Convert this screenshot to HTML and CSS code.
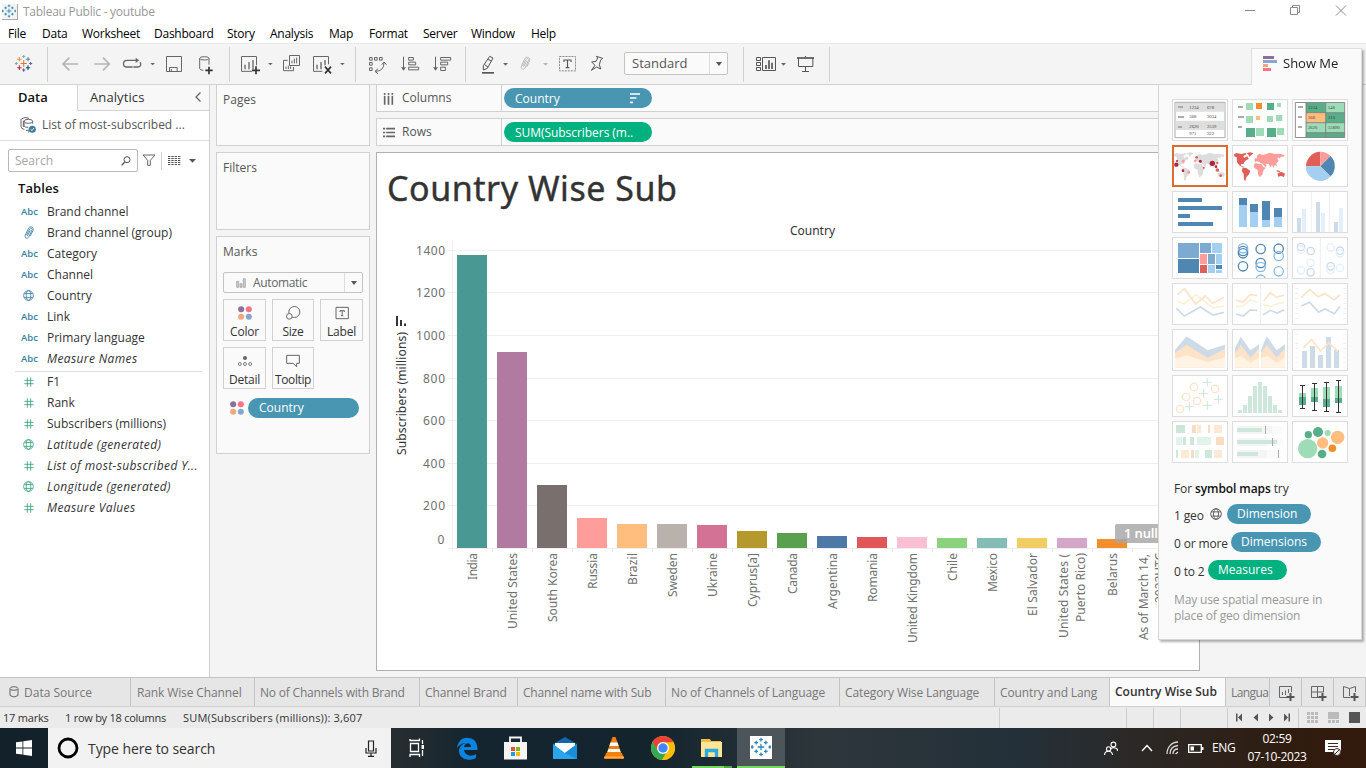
FILE: index.html
```html
<!DOCTYPE html>
<html lang="en">
<head>
<meta charset="utf-8">
<title>Tableau Public - youtube</title>
<link rel="stylesheet" href="styles.css">
</head>
<body>
<svg class="defs" width="0" height="0">
  <defs>
    <symbol id="hash" viewBox="0 0 30 30"><path d="M10 1V29M20 1V29M1 10H29M1 20H29" fill="none" stroke="#3aa57c" stroke-width="2.6"/></symbol>
    <symbol id="globe" viewBox="0 0 34 34"><g fill="none" stroke="currentColor" stroke-width="2.6"><circle cx="17" cy="17" r="15"/><ellipse cx="17" cy="17" rx="7" ry="15"/><path d="M4 11H30M4 23H30"/></g></symbol>
    <symbol id="clip" viewBox="0 0 36 42"><path d="M10 28L20 9C23 4 29 7 27 12L17 33C13 40 3 36 7 27L17 6C22-1 34 4 30 13L22 30M13 30L22 13" fill="none" stroke="currentColor" stroke-width="2.6"/></symbol>
    <symbol id="dots" viewBox="0 0 44 44"><circle cx="10" cy="10" r="9.5" fill="#8a719b"/><circle cx="34" cy="10" r="9.5" fill="#fa7283"/><circle cx="10" cy="34" r="9.5" fill="#f1a97c"/><circle cx="34" cy="34" r="9.5" fill="#85a7cf"/></symbol>
    <symbol id="cross" viewBox="-27 -27 54 54"><g fill="none" stroke="currentColor" stroke-width="3.4"><path d="M0-9V9M-9 0H9M0-25v10M-5-20h10M0 15v10M-5 20h10M-24-5v10M-28 0h8M24-5v10M20 0h8M-13-17v10M-18-12h10M13-17v10M8-12h10M-13 7v10M-18 12h10M13 7v10M8 12h10"/></g></symbol>
  </defs>
</svg>

<header class="titlebar">
  <span class="app-icon"><svg width="14" height="14"><use href="#cross"/></svg></span>
  <span class="app-title">Tableau Public - youtube</span>
  <svg class="window-buttons" width="126" height="23" viewBox="1240 0 126 23"><g fill="none" stroke="#8c8c8c"><path d="M1245 10.5h10M1290.5 7.500h7v7h-7zM1292.500 7.500v-2h7v7h-2M1336 5.500l10 10M1346 5.500l-10 10"/></g></svg>
</header>
<nav class="menubar"><span>File</span><span>Data</span><span>Worksheet</span><span>Dashboard</span><span>Story</span><span>Analysis</span><span>Map</span><span>Format</span><span>Server</span><span>Window</span><span>Help</span></nav>

<div class="toolbar">
  <svg width="47" height="41" viewBox="0 129 141 123"><g fill="none" stroke-width="3.2"><path d="M71 181v19M61.500 190.500h19" stroke="#e8762c"/><path d="M58 171v13M51.500 177.500h13" stroke="#eb912b"/><path d="M84 171v13M77.500 177.500h13" stroke="#59879b"/><path d="M58 196v14M51.500 203h13" stroke="#c72037"/><path d="M84 196v14M77.500 203h13" stroke="#1f447e"/><path d="M71 165v9M66.500 169.500h9M49 186v9M44.500 190.500h9" stroke="#7badb5"/><path d="M71 205v10M66 210h10M92 186v9M87.500 190.500h9" stroke="#5c6692"/></g></svg>
  <i class="sep"></i>
  <svg width="36" height="41" viewBox="144 129 108 123"><path d="M234 192H190M208 173L189 192L208 211" fill="none" stroke="#b5b5b5" stroke-width="5"/></svg>
  <svg width="32" height="41" viewBox="252 129 96 123"><path d="M283 192H327M309 173L328 192L309 211" fill="none" stroke="#b5b5b5" stroke-width="5"/></svg>
  <svg width="42" height="41" viewBox="348 129 126 123"><path d="M398 201H381C367 201 367 181 381 181H415M400 201H414C424 201 423 190 420 187" fill="none" stroke="#666" stroke-width="4"/><path d="M407 173L417 181L407 189Z" fill="#666"/><path d="M451 189h14l-7 7z" fill="#666"/></svg>
  <svg width="30" height="41" viewBox="474 129 90 123"><path d="M499.500 169.500H544.500V214.500H499.500ZM508.500 214V202.500H531.500V214M514 207V214" fill="none" stroke="#666" stroke-width="3"/></svg>
  <svg width="41" height="41" viewBox="564 129 123 123"><g fill="none" stroke="#666" stroke-width="3"><ellipse cx="613" cy="175" rx="14" ry="5"/><path d="M599 175V206Q601 211 610 211M627 175V194"/></g><path d="M627 200V223M616 211H638" stroke="#333" stroke-width="5"/></svg>
  <i class="sep"></i>
  <svg width="48" height="41" viewBox="690 129 144 123"><path d="M756 214H724.500V169.500H769.500V196" fill="none" stroke="#666" stroke-width="3"/><path d="M735 194V208M747 186V208M759 180V208" stroke="#666" stroke-width="4"/><path d="M768 199V223M756 211H780" stroke="#333" stroke-width="5"/><path d="M804 189h14l-7 7z" fill="#666"/></svg>
  <svg width="29" height="41" viewBox="834 129 87 123"><path d="M868.500 166.500H898.500V196.500H868.500ZM863 181H850.500V212H880.500V201" fill="none" stroke="#666" stroke-width="3"/><path d="M876 182V190M883 176V190M890 173V190M858 200V207M865 197V207M872 199V207" stroke="#666" stroke-width="3"/></svg>
  <svg width="48" height="41" viewBox="921 129 144 123"><path d="M967 214H940.500V169.500H985.500V193" fill="none" stroke="#666" stroke-width="3"/><path d="M951 194V208M963 186V208M975 180V196" stroke="#666" stroke-width="4"/><path d="M975 200L993 220M993 200L975 220" stroke="#333" stroke-width="5"/><path d="M1020 189h14l-7 7z" fill="#666"/></svg>
  <i class="sep"></i>
  <svg width="38" height="41" viewBox="1068 129 114 123"><path d="M1108.500 172.500h8v8h-8zM1123.500 172.500h8v8h-8zM1138.500 172.500h8v8h-8zM1108.500 187.500h8v8h-8zM1108.500 203.500h8v8h-8zM1126 214Q1152 214 1152 188M1145 194L1152 186L1159 194M1134 206L1125 214L1134 221" fill="none" stroke="#666" stroke-width="3"/></svg>
  <svg width="31" height="41" viewBox="1182 129 93 123"><path d="M1210.500 170V210M1226 172.500h14v8h-14zM1226 186.500h21v8h-21zM1226 201.500h30v8h-30z" fill="none" stroke="#666" stroke-width="3"/><path d="M1203 202h15l-7.500 10z" fill="#666"/></svg>
  <svg width="40" height="41" viewBox="1275 129 120 123"><path d="M1306.500 170V210M1322 172.500h30v8h-30zM1322 186.500h21v8h-21zM1322 201.500h14v10h-14z" fill="none" stroke="#666" stroke-width="3"/><path d="M1299 202h15l-7.500 10z" fill="#666"/></svg>
  <i class="sep"></i>
  <svg width="49" height="41" viewBox="48 129 147 123"><path d="M96 218.500H132" stroke="#555" stroke-width="5"/><path d="M119 169L129 174L112 205L100 210V197ZM104 194L114 201M114 178L124 183" fill="none" stroke="#555" stroke-width="3"/><path d="M159 189h15l-7.500 8z" fill="#666"/></svg>
  <svg width="41" height="41" viewBox="195 129 123 123" color="#b5b5b5"><use href="#clip" x="207" y="168" width="38" height="46"/><path d="M279 189h15l-7.500 8z" fill="#b5b5b5"/></svg>
  <svg width="28" height="41" viewBox="318 129 84 123"><path d="M328.500 169.500H376.500V212.500H328.500Z" fill="none" stroke="#888" stroke-width="3" stroke-dasharray="6 3"/><path d="M342 186V180H363V186M352.500 180V203M347 203H358" fill="none" stroke="#555" stroke-width="3.500"/></svg>
  <svg width="40" height="41" viewBox="402 129 120 123"><path d="M439 169L458 175L452 180L448 194L452 207L440 201L424 211L435 196L425 186L438 184L443 174Z" fill="none" stroke="#555" stroke-width="3"/></svg>
  <div class="fit-select"><span>Standard</span><b></b></div>
  <i class="sep"></i>
  <svg width="48" height="41" viewBox="882 129 144 123"><path d="M919.500 172.500h12v9h-12zM919.500 187.500h12v9h-12zM919.500 202.500h12v9h-12zM937.500 172.500h39v39h-39z" fill="none" stroke="#555" stroke-width="3"/><path d="M948 195V207M957 181V207M966 188V207" stroke="#555" stroke-width="5"/><path d="M993 189h15l-7.500 8z" fill="#666"/></svg>
  <svg width="37" height="41" viewBox="1026 129 111 123"><path d="M1041 174H1092" stroke="#555" stroke-width="5"/><path d="M1045.500 174V199.500H1088.500V174M1066.500 168V172M1066.500 200V214M1056 214.500H1077" fill="none" stroke="#555" stroke-width="3"/></svg>
  <i class="sep"></i>
</div>

<main class="workspace">
  <aside class="data-pane">
    <div class="pane-tabs"><div class="tab-data">Data</div><div class="tab-analytics"><span>Analytics</span><svg width="8" height="12" viewBox="0 0 8 12"><path d="M6.500 1.500L2 6L6.500 10.500" fill="none" stroke="#666" stroke-width="1.300"/></svg></div></div>
    <div class="source"><svg width="17" height="17" viewBox="0 0 51 51"><g fill="none" stroke="#666" stroke-width="3"><path d="M4 6Q15-2 27 4M3 6V30Q5 36 13 37M10 11V30"/><ellipse cx="25" cy="13" rx="13" ry="6"/><path d="M12 13V27Q16 32 25 31M38 13V20M18 40H27M27 34L32 40L24 46"/></g><circle cx="37" cy="37" r="10.500" fill="#3a7fa0"/><path d="M32 37L36 41L42 33" fill="none" stroke="#fff" stroke-width="2.500"/></svg><span>List of most-subscribed ...</span></div>
    <div class="search-row">
      <div class="search"><span>Search</span><svg width="10" height="10" viewBox="0 0 30 30"><circle cx="18" cy="11" r="9" fill="none" stroke="#555" stroke-width="3"/><path d="M11 18L2 28" stroke="#555" stroke-width="4"/></svg></div>
      <svg class="funnel" width="14" height="13" viewBox="0 0 42 39"><path d="M3 3H39L25 19V34H17V19Z" fill="none" stroke="#666" stroke-width="3"/></svg>
      <i></i>
      <svg class="view-list" width="29" height="12" viewBox="0 0 87 36"><path d="M0 4.500H37M0 10.500H37M0 16.500H37M0 22.500H37M0 28.500H37" stroke="#555" stroke-width="3" stroke-dasharray="7 3"/><path d="M63 12H84L73.500 23Z" fill="#555"/></svg>
    </div>
    <h2>Tables</h2>
    <ul class="fields dims">
      <li><b>Abc</b>Brand channel</li>
      <li><svg width="12" height="14" color="#3a7fa0"><use href="#clip"/></svg>Brand channel (group)</li>
      <li><b>Abc</b>Category</li>
      <li><b>Abc</b>Channel</li>
      <li><svg width="11" height="11" color="#3a7fa0"><use href="#globe"/></svg>Country</li>
      <li><b>Abc</b>Link</li>
      <li><b>Abc</b>Primary language</li>
      <li class="gen"><b>Abc</b>Measure Names</li>
    </ul>
    <ul class="fields measures">
      <li><svg width="10" height="10"><use href="#hash"/></svg>F1</li>
      <li><svg width="10" height="10"><use href="#hash"/></svg>Rank</li>
      <li><svg width="10" height="10"><use href="#hash"/></svg>Subscribers (millions)</li>
      <li class="gen"><svg width="11" height="11" color="#3aa57c"><use href="#globe"/></svg>Latitude (generated)</li>
      <li class="gen"><svg width="10" height="10"><use href="#hash"/></svg>List of most-subscribed Y...</li>
      <li class="gen"><svg width="11" height="11" color="#3aa57c"><use href="#globe"/></svg>Longitude (generated)</li>
      <li class="gen"><svg width="10" height="10"><use href="#hash"/></svg>Measure Values</li>
    </ul>
  </aside>

  <section class="cards">
    <div class="card pages">Pages</div>
    <div class="card filters">Filters</div>
    <div class="card marks">
      <div class="marks-title">Marks</div>
      <div class="mark-type"><svg width="10" height="10" viewBox="0 0 30 30"><g fill="#ccc" stroke="#999" stroke-width="2"><path d="M2 10h6v18H2zM12 17h6v11h-6zM22 2h6v26h-6z"/></g></svg><span>Automatic</span><b></b></div>
      <div class="mark-buttons">
        <div><svg width="14" height="14"><use href="#dots"/></svg>Color</div>
        <div><svg width="15" height="14" viewBox="0 0 45 42"><g fill="none" stroke="#666" stroke-width="3"><circle cx="25" cy="18" r="16.500"/><circle cx="10" cy="31" r="8.500" fill="#fafafa"/></g></svg>Size</div>
        <div><svg width="14" height="14" viewBox="0 0 42 42"><path d="M3 4H40V38H3ZM15 18V14H28V18M21.500 14V29M18 29H25" fill="none" stroke="#666" stroke-width="3"/></svg>Label</div>
        <div><svg width="14" height="14" viewBox="0 0 42 42"><circle cx="21" cy="12" r="6" fill="#666"/><g fill="none" stroke="#666" stroke-width="2.500"><circle cx="5.500" cy="30" r="4.500"/><circle cx="21" cy="30" r="4.500"/><circle cx="36.500" cy="30" r="4.500"/></g></svg>Detail</div>
        <div><svg width="14" height="14" viewBox="0 0 42 42"><path d="M2 4H40V28H32V38L21 28H2Z" fill="none" stroke="#666" stroke-width="3"/></svg><span class="tip-label">Tooltip</span></div>
      </div>
      <div class="encoding"><svg width="14" height="14"><use href="#dots"/></svg><span class="pill blue">Country</span></div>
    </div>
  </section>

  <section class="view-column">
    <div class="shelf"><div class="shelf-name"><svg width="12" height="13" viewBox="0 0 36 39"><path d="M5 3V38M16.500 3V38M28 3V38" stroke="#666" stroke-width="5"/><path d="M0 10H36" stroke="#fafafa" stroke-width="3"/></svg>Columns</div><span class="pill blue">Country<svg width="10" height="11" viewBox="0 0 30 33"><path d="M0 3H30M0 15H19M0 28H9" stroke="#fff" stroke-width="5"/></svg></span></div>
    <div class="shelf"><div class="shelf-name"><svg width="12" height="13" viewBox="0 0 36 39"><path d="M0 8H36M0 19.500H36M0 31H36" stroke="#666" stroke-width="5"/><path d="M8 0V39" stroke="#fafafa" stroke-width="3"/></svg>Rows</div><span class="pill green">SUM(Subscribers (m..</span></div>
    <div class="sheet">
      <svg class="chart" width="822" height="517" viewBox="377 153 822 517">
        <text class="chart-title" x="387" y="201" textLength="290">Country Wise Sub</text>
        <text class="col-head" x="790" y="235" textLength="45">Country</text>
        <path class="grid" d="M448 250.500H1199M448 292.500H1199M448 335.500H1199M448 378.500H1199M448 420.500H1199M448 463.500H1199M448 505.500H1199M452.500 240V548"/>
        <path class="grid" d="M448 548.500H1199M452.500 548v4M492.500 548v4M532.500 548v4M572.500 548v4M612.500 548v4M652.500 548v4M692.500 548v4M732.500 548v4M772.500 548v4M812.500 548v4M852.500 548v4M892.500 548v4M932.500 548v4M972.500 548v4M1012.500 548v4M1052.500 548v4M1092.500 548v4M1132.500 548v4"/>
        <g class="tick">
          <text x="416" y="255" textLength="29">1400</text><text x="416" y="297" textLength="29">1200</text><text x="416" y="340" textLength="29">1000</text><text x="423" y="383" textLength="22">800</text><text x="423" y="425" textLength="22">600</text><text x="423" y="468" textLength="22">400</text><text x="423" y="510" textLength="22">200</text><text x="437.500" y="544">0</text>
        </g>
        <text class="axis-name" transform="translate(406 455) rotate(-90)" textLength="123">Subscribers (millions)</text>
        <path d="M396 316h2v10h-2zM400 320h2v6h-2zM404 323.500h2v2.500h-2z" fill="#333"/>
        <g shape-rendering="crispEdges">
          <path fill="#499894" d="M457 255h30v293h-30z"/><path fill="#b07aa1" d="M497 352h30v196h-30z"/><path fill="#79706e" d="M537 485h30v63h-30z"/><path fill="#ff9d9a" d="M577 518h30v30h-30z"/><path fill="#ffbe7d" d="M617 524h30v24h-30z"/><path fill="#bab0ac" d="M657 524h30v24h-30z"/><path fill="#d37295" d="M697 525h30v23h-30z"/><path fill="#b6992d" d="M737 531h30v17h-30z"/><path fill="#59a14f" d="M777 533h30v15h-30z"/><path fill="#4e79a7" d="M817 536h30v12h-30z"/><path fill="#e15759" d="M857 537h30v11h-30z"/><path fill="#fabfd2" d="M897 537h30v11h-30z"/><path fill="#8cd17d" d="M937 538h30v10h-30z"/><path fill="#86bcb6" d="M977 538h30v10h-30z"/><path fill="#f1ce63" d="M1017 538h30v10h-30z"/><path fill="#d4a6c8" d="M1057 538h30v10h-30z"/><path fill="#f28e2b" d="M1097 539h30v9h-30z"/>
        </g>
        <g class="cat">
          <text transform="translate(477 580) rotate(-90)" textLength="27">India</text>
          <text transform="translate(517 629) rotate(-90)" textLength="76">United States</text>
          <text transform="translate(557 622) rotate(-90)" textLength="69">South Korea</text>
          <text transform="translate(597 589) rotate(-90)" textLength="36">Russia</text>
          <text transform="translate(637 585) rotate(-90)" textLength="32">Brazil</text>
          <text transform="translate(677 597) rotate(-90)" textLength="44">Sweden</text>
          <text transform="translate(717 597) rotate(-90)" textLength="44">Ukraine</text>
          <text transform="translate(757 607) rotate(-90)" textLength="54">Cyprus[a]</text>
          <text transform="translate(797 594) rotate(-90)" textLength="41">Canada</text>
          <text transform="translate(837 609) rotate(-90)" textLength="56">Argentina</text>
          <text transform="translate(877 602) rotate(-90)" textLength="49">Romania</text>
          <text transform="translate(917 643) rotate(-90)" textLength="90">United Kingdom</text>
          <text transform="translate(957 581) rotate(-90)" textLength="28">Chile</text>
          <text transform="translate(997 592) rotate(-90)" textLength="39">Mexico</text>
          <text transform="translate(1037 616) rotate(-90)" textLength="63">El Salvador</text>
          <text transform="translate(1068 638) rotate(-90)" textLength="84">United States (</text>
          <text transform="translate(1085 622) rotate(-90)" textLength="69">Puerto Rico)</text>
          <text transform="translate(1117 596) rotate(-90)" textLength="43">Belarus</text>
          <text transform="translate(1148 640) rotate(-90)" textLength="86">As of March 14,</text>
          <text transform="translate(1164 603) rotate(-90)" textLength="50">2023UTC</text>
        </g>
        <rect x="1115" y="524" width="66" height="19" rx="2" fill="#a6a6a6" fill-opacity=".82"/>
        <text class="null-text" x="1124" y="538" textLength="34">1 null</text>
      </svg>
    </div>
  </section>
</main>

<aside class="show-me">
  <div class="show-me-tab"><svg width="14" height="15" viewBox="0 0 42 45"><path fill="#8a719b" d="M0 0h33v9H0z"/><path fill="#85a7cf" d="M0 12h42v9H0z"/><path fill="#f1a97c" d="M0 24h15v9H0z"/><path fill="#fa7283" d="M0 36h24v9H0z"/></svg><span>Show Me</span></div>
  <div class="show-me-body">
    <div class="thumbs">
      <svg viewBox="48 45 168 126"><path d="M57 55h150v106H57z" fill="#fff" stroke="#aaa" stroke-width="3"/><path fill="#dedede" d="M59 57h146v26H59zM59 110h146v28H59z"/><path d="M66 69h15M66 99h18M66 129h12" stroke="#aaa" stroke-width="6"/><g class="tiny"><text x="100" y="75">1234</text><text x="153" y="75">678</text><text x="100" y="103">368</text><text x="153" y="103">3034</text><text x="100" y="131">2620</text><text x="153" y="131">2559</text><text x="100" y="154">971</text><text x="153" y="154">322</text></g></svg>
      <svg viewBox="228 45 168 126"><path d="M246 69h15M246 99h18M246 129h12" stroke="#aaa" stroke-width="6"/><path fill="#9edcb8" d="M270 57h21v21h-21zM363 57h12v12h-12zM270 96h21v21h-21zM333 96h18v18h-18zM360 93h19v18h-19zM300 132h24v24h-24zM363 132h21v21h-21z"/><path fill="#57ae89" d="M333 57h21v21h-21zM270 132h27v27h-27zM333 132h27v27h-27z"/><path fill="#f28e2b" d="M300 57h18v18h-18z"/><path fill="#ffbe7d" d="M300 96h12v12h-12z"/></svg>
      <svg viewBox="408 45 168 126"><path d="M418 55h148v106H418z" fill="#fff"/><path fill="#57ae89" d="M450 56h59v30h-59zM509 86h57v30h-57zM450 146h59v14h-59z"/><path fill="#9edcb8" d="M509 56h57v30h-57zM450 116h59v30h-59zM509 116h57v30h-57z"/><path fill="#ffbe7d" d="M450 86h59v30h-59z"/><path fill="#57ae89" d="M509 146h57v14h-57z"/><path d="M418 55.500h148v105H418zM450 56v104M509 56v104M450 86h116M450 116h116M450 146h116" fill="none" stroke="#777" stroke-width="2.500"/><path d="M426 69h15M426 99h12M426 129h12" stroke="#aaa" stroke-width="6"/><g class="tiny"><text x="456" y="75">1234</text><text x="516" y="75">546</text><text x="456" y="106">368</text><text x="516" y="106">310</text><text x="456" y="136">2620</text><text x="516" y="136">53890</text></g></svg>
      <svg class="picked" viewBox="48 183 168 126"><g fill="#ddd"><path d="M54 211L62 207L76 210L88 207L92 210L82 216L84 222L94 217L98 225L90 229L83 237L84 240L75 240L76 246L84 248L82 251L70 244L63 235L62 220L55 217ZM92 207L103 205L113 208L105 214L101 219L97 212Z"/><path d="M80 251L91 252L103 260L99 271L91 280L88 291L84 287L83 270L77 260Z"/><path d="M185 268L196 263L207 269L204 279L195 276L186 278ZM182 259L192 261L192 264L182 263Z"/><path d="M115 227L119 221L122 224L124 213L131 209L138 213L150 211L160 206L176 210L190 209L206 213L203 218L194 218L192 225L188 220L184 224L188 231L181 238L183 247L176 243L173 253L168 242L164 250L158 240L149 239L152 246L147 249L140 239L133 237L129 233L123 232L118 235Z"/><path d="M117 238L136 240L143 250L149 251L141 262L140 271L131 280L126 270L125 258L115 252L113 245Z"/></g><g fill="#b6213b"><circle cx="61" cy="242" r="6.500"/><circle cx="63" cy="231" r="3"/><circle cx="169" cy="238" r="8"/><circle cx="133" cy="232" r="4.500"/><circle cx="81" cy="260" r="4"/><circle cx="180" cy="248" r="4"/></g><g fill="#e15f59"><circle cx="122" cy="220" r="4"/><circle cx="184" cy="258" r="5.500"/><circle cx="194" cy="275" r="4"/><circle cx="143" cy="251" r="3"/><circle cx="184" cy="237" r="3.500"/></g><g fill="#ff9d9a"><circle cx="82" cy="232" r="4.500"/><circle cx="118" cy="231" r="4"/><circle cx="98" cy="265" r="4.500"/></g></svg>
      <svg viewBox="228 183 168 126"><g transform="translate(180 0)"><g fill="#e15f59"><path d="M54 211L62 207L76 210L88 207L92 210L82 216L84 222L94 217L98 225L90 229L83 237L84 240L75 240L76 246L84 248L82 251L70 244L63 235L62 220L55 217ZM92 207L103 205L113 208L105 214L101 219L97 212Z"/><path d="M80 251L91 252L103 260L99 271L91 280L88 291L84 287L83 270L77 260Z"/><path d="M185 268L196 263L207 269L204 279L195 276L186 278ZM182 259L192 261L192 264L182 263Z"/></g><g fill="#ff9d9a"><path d="M115 227L119 221L122 224L124 213L131 209L138 213L150 211L160 206L176 210L190 209L206 213L203 218L194 218L192 225L188 220L184 224L188 231L181 238L183 247L176 243L173 253L168 242L164 250L158 240L149 239L152 246L147 249L140 239L133 237L129 233L123 232L118 235Z"/><path d="M117 238L136 240L143 250L149 251L141 262L140 271L131 280L126 270L125 258L115 252L113 245Z"/></g></g></svg>
      <svg viewBox="408 183 168 126"><path fill="#e15f59" d="M493 247H450A43.500 43.500 0 0 1 493 203.500Z"/><path fill="#ff9d9a" d="M493 247V203.500A43.500 43.500 0 0 1 523.700 216.300Z"/><path fill="#5087b2" d="M493 247L523.700 216.300A43.500 43.500 0 0 1 523.700 277.700Z"/><path fill="#a5cff0" d="M493 247L523.700 277.700A43.500 43.500 0 0 1 449.500 247Z"/></svg>
      <svg viewBox="48 321 168 126"><path fill="#5087b2" d="M66 342h72v12H66zM66 366h132v12H66zM66 390h36v12H66zM66 414h105v12H66z"/></svg>
      <svg viewBox="228 321 168 126"><path fill="#a5cff0" d="M249 363h24v66h-24zM282 384h24v45h-24zM318 408h24v21h-24zM354 399h24v30h-24z"/><path fill="#5087b2" d="M249 342h24v21h-24zM282 360h24v24h-24zM318 351h24v57h-24zM354 372h24v27h-24z"/></svg>
      <svg viewBox="408 321 168 126"><path d="M466 324v120M520 324v120" stroke="#eee" stroke-width="3"/><path fill="#cddae7" d="M423 402h12v42h-12zM480 354h12v90h-12zM534 414h12v30h-12z"/><path fill="#e3f0fb" d="M438 375h12v69h-12zM495 387h12v57h-12zM549 372h12v72h-12z"/></svg>
      <svg viewBox="48 459 168 126"><path fill="#7caad0" d="M66 477h63v45H66zM132 477h33v30h-33zM156 510h21v30h-21z"/><path fill="#5087b2" d="M66 525h63v42H66zM180 543h18v12h-18z"/><path fill="#a5cff0" d="M168 477h30v30h-30zM180 510h18v30h-18zM156 543h21v24h-21zM180 558h18v9h-18z"/><path fill="#ff9d9a" d="M132 510h21v30h-21z"/><path fill="#e15f59" d="M132 543h21v24h-21z"/></svg>
      <svg viewBox="228 459 168 126"><g fill="none" stroke="#5087b2" stroke-width="4"><circle cx="261" cy="501" r="14"/><circle cx="261" cy="508" r="14"/><circle cx="261" cy="547" r="14"/><circle cx="314" cy="495" r="14"/><circle cx="314" cy="537" r="14"/><circle cx="368" cy="494" r="14"/></g><g fill="none" stroke="#86bbe5" stroke-width="4"><circle cx="261" cy="493" r="14"/><circle cx="314" cy="549" r="14"/><circle cx="314" cy="587" r="14"/><circle cx="368" cy="516" r="14"/><circle cx="368" cy="562" r="14"/></g></svg>
      <svg viewBox="408 459 168 126"><path d="M493 462v120" stroke="#eee" stroke-width="3"/><g fill="none" stroke="#cddae7" stroke-width="4"><circle cx="435" cy="489" r="11"/><circle cx="464" cy="501" r="11"/><circle cx="464" cy="565" r="11"/><circle cx="552" cy="500" r="11"/><circle cx="524" cy="547" r="11"/></g><g fill="none" stroke="#e3f0fb" stroke-width="4"><circle cx="435" cy="497" r="11"/><circle cx="464" cy="537" r="11"/><circle cx="435" cy="559" r="11"/><circle cx="524" cy="490" r="11"/><circle cx="552" cy="508" r="11"/><circle cx="524" cy="558" r="11"/><circle cx="552" cy="552" r="11"/></g></svg>
      <svg viewBox="48 597 168 126"><g fill="none" stroke-width="5"><path stroke="#fdf0d7" d="M63 650L84 660L120 632L171 672L204 666"/><path stroke="#fee3c9" d="M64 632L85 614L119 660L148 636L170 658L204 640"/><path stroke="#cddae7" d="M61 673L85 696L133 669L171 693L204 685"/></g></svg>
      <svg viewBox="228 597 168 126"><path d="M314 600v120" stroke="#eee" stroke-width="3"/><g fill="none" stroke-width="5"><path stroke="#fee3c9" d="M240 649L262 654L282 632L303 635M323 651L343 626L361 640L384 633"/><path stroke="#fdf0d7" d="M240 668L262 666L282 648L303 655M321 661L343 668L361 660L385 655"/><path stroke="#cddae7" d="M240 690L262 696L282 678L303 679M321 693L343 679L363 687L385 677"/></g></svg>
      <svg viewBox="408 597 168 126"><path d="M422 612v96M566 612v96" stroke="#eaeaea" stroke-width="9" stroke-dasharray="2 13"/><g fill="none" stroke-width="5"><path stroke="#fee3c9" d="M436 641L461 616L487 638L506 629L535 648L552 632"/><path stroke="#cddae7" d="M436 666L461 655L488 685L507 675L535 689L552 667"/></g></svg>
      <svg viewBox="48 735 168 126"><path fill="#cddae7" d="M57 798L92 757L155 799L207 782V851H57Z"/><path fill="#fee3c9" d="M57 806L92 782L155 822L207 794V851H57Z"/><path fill="#fff3e4" d="M57 824L92 814L155 835L207 820V851H57Z"/></svg>
      <svg viewBox="228 735 168 126"><path fill="#cddae7" d="M237 793L254 758L283 799L309 781V851H237ZM315 798L332 757L362 799L387 781V851H315Z"/><path fill="#fee3c9" d="M237 807L255 782L283 821L309 793V851H237ZM315 807L333 782L361 821L387 793V851H315Z"/><path fill="#fff3e4" d="M237 824L255 815L283 836L309 821V851H237ZM315 824L333 815L361 836L387 821V851H315Z"/></svg>
      <svg viewBox="408 735 168 126"><path d="M422 750v102M566 750v102" stroke="#eaeaea" stroke-width="9" stroke-dasharray="2 12"/><path fill="#cddae7" d="M438 801h15v51h-15zM462 786h15v66h-15zM486 813h15v39h-15zM510 759h15v93h-15zM534 798h15v54h-15z"/><path d="M442 791L467 766L493 801L519 777L546 803" fill="none" stroke="#fee3c9" stroke-width="5"/></svg>
      <svg viewBox="48 30 168 126"><g fill="none" stroke="#fee3c9" stroke-width="4"><circle cx="114" cy="66" r="11"/><circle cx="177" cy="72" r="11"/><circle cx="90" cy="96" r="11"/><circle cx="123" cy="108" r="11"/><circle cx="72" cy="132" r="11"/></g><path d="M154 39v26M141 52h26M143 72v27M129 86h27M187 90v27M173 103h28M154 108v27M141 121h27M100 111v27M87 125h26" stroke="#cde7da" stroke-width="3"/></svg>
      <svg viewBox="228 30 168 126"><path fill="#cde7da" d="M246 135h12v9h-12zM261 120h12v24h-12zM276 93h12v51h-12zM291 63h12v81h-12zM306 51h12v93h-12zM321 63h12v81h-12zM336 93h12v51h-12zM351 120h12v24h-12zM366 135h12v9h-12z"/></svg>
      <svg viewBox="408 30 168 126"><path fill="#9edcb8" d="M429 84h21v12h-21zM465 69h21v27h-21zM501 66h21v36h-21zM537 63h21v36h-21z"/><path fill="#57ae89" d="M429 96h21v24h-21zM465 96h21v15h-21zM501 102h21v24h-21zM537 99h21v15h-21z"/><path d="M439.500 61V131M475.500 55V137M511.500 52V140M547.500 45V143M432 61.500h15M432 130.500h15M468 55.500h15M468 136.500h15M504 52.500h15M504 139.500h15M540 46.500h15M540 142.500h15" stroke="#333" stroke-width="3"/></svg>
      <svg viewBox="48 168 168 126"><path fill="#cde7da" d="M60 180h27v24H60zM81 216h9v24h-9zM102 216h12v24h-12zM60 255h6v24h-6zM147 255h21v24h-21z"/><path fill="#e2f3ea" d="M60 216h18v24H60zM123 216h42v24h-42zM117 255h12v24h-12z"/><path fill="#fbdcc2" d="M108 180h12v24h-12zM156 180h6v24h-6zM180 216h24v24h-24zM105 255h9v24h-9z"/><path fill="#fee9d4" d="M123 180h12v24h-12zM174 180h24v24h-24zM75 255h24v24H75zM174 255h24v24h-24z"/></svg>
      <svg viewBox="228 168 168 126"><path fill="#f5f5f5" d="M243 183h105v24H243zM243 219h90v24h-90zM243 255h90v24h-90z"/><path fill="#fafafa" d="M348 183h30v24h-30zM333 219h48v24h-48zM333 255h42v24h-42z"/><path fill="#cde7da" d="M243 189h75v12h-75zM243 225h120v12H243zM243 261h63v12h-63z"/><path d="M328.500 183v24M349.500 219v24M367.500 255v24" stroke="#aaa" stroke-width="3"/></svg>
      <svg viewBox="408 168 168 126"><g fill="#9edcb8"><circle cx="455" cy="251" r="29"/><circle cx="515" cy="204" r="9"/></g><g fill="#57ae89"><circle cx="457" cy="209" r="11"/><circle cx="486" cy="201" r="15"/><circle cx="498" cy="267" r="13"/></g><g fill="#ffbe7d"><circle cx="500" cy="234" r="17"/><circle cx="545" cy="217" r="20"/></g><circle cx="529" cy="250" r="11.500" fill="#f28e2b"/></svg>
    </div>
    <div class="hint">
      <p class="for">For <b>symbol maps</b> try</p>
      <div class="need"><span class="need-geo">1 geo</span><svg width="12" height="12" color="#555"><use href="#globe"/></svg><span class="pill blue p-dim">Dimension</span></div>
      <div class="need"><span class="need-more">0 or more</span><span class="pill blue p-dims">Dimensions</span></div>
      <div class="need"><span class="need-two">0 to 2</span><span class="pill green p-meas">Measures</span></div>
      <p class="note">May use spatial measure in<br>place of geo dimension</p>
    </div>
  </div>
</aside>

<nav class="sheet-tabs">
  <div class="t1"><svg width="10" height="12" viewBox="0 0 10 12"><path d="M1 3V9.500Q5 12.500 9 9.500V3" fill="none" stroke="#666"/><ellipse cx="5" cy="2.500" rx="4" ry="1.800" fill="none" stroke="#666"/></svg>Data Source</div>
  <div class="t2">Rank Wise Channel</div><div class="t3">No of Channels with Brand</div><div class="t4">Channel Brand</div><div class="t5">Channel name with Sub</div><div class="t6">No of Channels of Language</div><div class="t7">Category Wise Language</div><div class="t8">Country and Lang</div><div class="t9 active">Country Wise Sub</div><div class="t10">Langua</div>
  <div class="add a1"><svg width="18" height="16" viewBox="0 0 18 16"><path d="M9 12.500H1.500V1.500H13.500V7M4.500 7v3M7.500 5.500V10M10.500 4V8" fill="none" stroke="#666"/><path d="M12.500 8v8M8.500 12h8" stroke="#555" stroke-width="2"/></svg></div>
  <div class="add a2"><svg width="18" height="16" viewBox="0 0 18 16"><path d="M9 12.500H1.500V1.500H13.500V7M7.500 1.500V12.500M1.500 7H13.500" fill="none" stroke="#666"/><path d="M12.500 8v8M8.500 12h8" stroke="#555" stroke-width="2"/></svg></div>
  <div class="add a3"><svg width="18" height="16" viewBox="0 0 18 16"><path d="M8 12.500L1.500 12.500V1.500L7.500 3.500L13.500 1.500V7M7.500 3.500V11" fill="none" stroke="#666"/><path d="M12.500 8v8M8.500 12h8" stroke="#555" stroke-width="2"/></svg></div>
</nav>
<div class="status"><span class="s1">17 marks</span><span class="s2">1 row by 18 columns</span><span class="s3">SUM(Subscribers (millions)): 3,607</span>
  <svg width="367" height="21" viewBox="999 707 367 21"><path d="M999.500 708v20M1126.500 708v20M1153.500 708v20M1180.500 708v20M1227.500 708v20M1298.500 708v20" stroke="#ccc"/><path fill="#555" d="M1236 713.500h1.500v8h-1.500zM1242 713.500v8l-4-4zM1258 713.500v8l-4.500-4zM1269 713.500v8l4.500-4zM1284 713.500v8l4-4zM1288.500 713.500h1.500v8h-1.500zM1349 712h11v11h-11z"/><path d="M1307 713.500h11M1307 717.500h11M1307 721.500h11M1328 721.500h11" stroke="#bbb" stroke-width="3" stroke-dasharray="3 1"/><path fill="#bbb" d="M1328 712h11v7h-11z"/></svg>
</div>

<footer class="taskbar">
  <div class="start"><svg width="16" height="16" viewBox="0 0 16 16"><path fill="#fff" d="M0 2.300L6.500 1.400V7.500H0zM7.300 1.300L16 0V7.500H7.300zM0 8.400H6.500V14.600L0 13.700zM7.300 8.400H16V16L7.300 14.700z"/></svg></div>
  <div class="win-search"><svg width="22" height="22" viewBox="0 0 22 22"><circle cx="11" cy="11" r="9" fill="none" stroke="#000" stroke-width="2.800"/></svg><span>Type here to search</span><svg width="12" height="17" viewBox="0 0 12 17"><path d="M3.500 1h5v10h-5zM1 8V13H11V8M6 13V16M3 16.300H9" fill="none" stroke="#222" stroke-width="1.200"/></svg></div>
  <svg width="50" height="40" viewBox="391 728 50 40"><path d="M410.500 743.500h8v8h-8zM410 739v1.500h9.500v-2M410 757v-2.500h9.500v2.500M422.500 740v4M422.500 750v6" fill="none" stroke="#fff" stroke-width="1.300"/><path fill="#fff" d="M421.500 745h2.500v4h-2.500z"/></svg>
  <svg width="49" height="40" viewBox="441 728 49 40"><path fill="#0a84e0" d="M457 748C458 741 463 737 468 738C475 738 477.500 743 477.500 750H464C465 756 472 757 476 754V758C469 762 459 759 459 751C459 747 462 744 466 743C462 743 459 745 457 748ZM464 747H471C471 742 465 742 464 747Z"/></svg>
  <svg width="49" height="40" viewBox="490 728 49 40"><path d="M510 742V737.500H521V742" fill="none" stroke="#f5f5f5" stroke-width="1.800"/><path fill="#f5f5f5" d="M504 742h23v17.500h-23z"/><path fill="#e8502e" d="M511 747h4v4h-4z"/><path fill="#7fba00" d="M516 747h4v4h-4z"/><path fill="#1ba1e2" d="M511 752h4v4h-4z"/><path fill="#ffb900" d="M516 752h4v4h-4z"/></svg>
  <svg width="49" height="40" viewBox="539 728 49 40"><path fill="#1166ad" d="M553 744L565 737L577 744V750H553z"/><path fill="#fff" d="M555 743H575V751L565 755L555 751z"/><path fill="#2aa4ea" d="M553 744L565 753L577 744V759H553z"/><path fill="#1b8cd8" d="M577 744V759L565 753z"/></svg>
  <svg width="49" height="40" viewBox="588 728 49 40"><path fill="#f08010" d="M612.500 737h3l6.500 18H606z"/><path fill="#fff" d="M610.500 742.500h7l1.200 3.500h-9.400zM608.500 749h11l1 3h-13z"/><path fill="#f08010" d="M606 753h16l2 6H604z"/><path fill="#ffb04a" d="M604 756.500h20v1.500H604z"/></svg>
  <svg width="50" height="40" viewBox="637 728 50 40"><circle cx="663" cy="748" r="12" fill="#fbbc05"/><path fill="#ea4335" d="M652.600 742A12 12 0 0 1 673.400 742L663 743L657.500 751z"/><path fill="#34a853" d="M652.600 742A12 12 0 0 0 662 760L668 750L658 751z"/><path fill="#fbbc05" d="M663 742.500H673.600A12 12 0 0 1 662 760L668 750z"/><circle cx="663" cy="748" r="6" fill="#fff"/><circle cx="663" cy="748" r="4.700" fill="#4285f4"/></svg>
  <svg width="50" height="40" viewBox="687 728 50 40"><path fill="#edbd4c" d="M701 739h9l1 2h10v5h-20z"/><path fill="#ffe596" d="M701 742h21v15h-21z"/><path d="M706.500 757v-6.500h10v6.500" fill="none" stroke="#2aaae2" stroke-width="3.400"/><path fill="#76d860" d="M692 766h32v2h-32z"/><path fill="#4fa848" d="M724 766h8v2h-8z"/></svg>
  <div class="task-active"><span><svg width="20" height="20"><use href="#cross"/></svg></span></div>
  <div class="tray">
    <svg width="16" height="17" viewBox="0 0 20 18"><g fill="none" stroke="#fff" stroke-width="1.400"><circle cx="13" cy="4" r="3"/><path d="M9 10Q13 6 18 10V12"/><circle cx="7" cy="9.500" r="2.700"/><path d="M2 17Q2 12.500 7 12.500Q11 12.500 12 17"/></g></svg>
    <svg class="chev" width="12" height="8" viewBox="0 0 12 8"><path d="M1 7L6 1.500L11 7" fill="none" stroke="#fff" stroke-width="1.400"/></svg>
    <svg class="wifi" width="13" height="14" viewBox="0 0 13 14"><g fill="none" stroke="#ddd" stroke-width="1.300"><path d="M1 13C1 6 6 1 12 1M4 13C4 8 7 5 12 4.500M7 13C7 10 9 8 12 8M9.500 13L12 11"/></g></svg>
    <svg class="batt" width="16" height="9" viewBox="0 0 16 9"><path d="M.7.700H13.300V8.300H.7z" fill="none" stroke="#fff" stroke-width="1.300"/><path fill="#fff" d="M2.500 2.500H6V6.500H2.500zM14 3h1.500v3H14z"/></svg>
    <span class="eng">ENG</span>
    <div class="clock"><div class="time">02:59</div><div class="date">07-10-2023</div></div>
    <svg class="notif" width="17" height="18" viewBox="0 0 17 18"><path fill="#fff" d="M0 1H16V13L12 17V13H0z"/><path d="M3 4.500H13M3 7.500H13M3 10.500H9" stroke="#3a2a20" stroke-width="1.200"/><circle cx="12" cy="13" r="3.500" fill="#fff" stroke="#3a2a20"/><path d="M9.500 15.500L14.500 10.500" stroke="#3a2a20"/></svg>
  </div>
</footer>
</body>
</html>
```

FILE: styles.css
```css
* { box-sizing: border-box; }
body { margin: 0; width: 1366px; height: 768px; overflow: hidden; position: relative; background: #f4f4f4; color: #333; font: 12px/16px "Open Sans", "Noto Sans", sans-serif; display: flex; flex-direction: column; }
svg { display: block; flex: none; }
.defs { position: absolute; }
.titlebar { height: 23px; flex: none; background: #fff; display: flex; align-items: center; }
.app-icon { width: 16px; height: 16px; margin-left: 2px; background: #f4f4f4; border-right: 1px solid #aaa; border-bottom: 1px solid #aaa; color: #2d84b5; }
.app-title { margin-left: 5px; color: #999; white-space: nowrap; letter-spacing: -.25px; }
.window-buttons { margin-left: auto; }
.menubar { height: 20px; flex: none; background: #fff; color: #000; display: grid; grid-template-columns: 34px 40px 72px 73px 43px 59px 40px 54px 48px 60px 60px; padding-left: 8px; line-height: 21px; letter-spacing: -.25px; }
.toolbar { height: 41px; flex: none; border-top: 1px solid #eaeaea; display: flex; }
.toolbar svg { margin-top: -1px; }
.sep { width: 1px; height: 35px; margin-top: 3px; background: #d0d0d0; flex: none; }
.fit-select { width: 104px; height: 23px; margin: 8px 15px 0 0; border: 1px solid #c4c4c4; border-radius: 2px; background: #fafafa; display: flex; font-size: 13px; color: #555; line-height: 21px; }
.fit-select span { flex: 1; padding-left: 7px; }
.fit-select b, .mark-type b { width: 18px; border-left: 1px solid #ddd; display: grid; place-items: center; }
.fit-select b::after, .mark-type b::after { content: ""; border: 3.5px solid transparent; border-top: 4px solid #555; border-bottom: 0; }
.workspace { height: 594px; flex: none; display: flex; border-top: 1px solid #d4d4d4; }

.data-pane { width: 210px; background: #fff; border-right: 1px solid #d0d0d0; height: 593px; }
.pane-tabs { display: flex; height: 26px; font-size: 13px; line-height: 25px; }
.tab-data { width: 77px; padding-left: 18px; font-weight: 600; color: #111; }
.tab-analytics { flex: 1; border-left: 1px solid #d4d4d4; border-bottom: 1px solid #d4d4d4; background: #f8f8f8; padding: 0 7px 1px 12px; display: flex; justify-content: space-between; align-items: center; color: #333; letter-spacing: .1px; }
.source { height: 30px; border-bottom: 1px solid #ddd; display: flex; align-items: center; padding-left: 20px; color: #555; }
.source span { margin: -1px 0 0 5px; }
.search-row { display: flex; align-items: center; margin: 8px 0 0 8px; }
.search { width: 130px; height: 23px; border: 1px solid #b8b8b8; border-radius: 2px; display: flex; align-items: center; justify-content: space-between; padding: 0 6px; color: #a6a6a6; }
.funnel { margin-left: 4px; }
.search-row i { width: 1px; height: 18px; background: #d0d0d0; margin-left: 5px; }
.view-list { margin-left: 6px; }
h2 { font-size: 13px; line-height: 18px; font-weight: 600; color: #111; margin: 7px 0 4px 18px; letter-spacing: .1px; }
.fields { margin: 0; padding: 0; list-style: none; }
.fields li { height: 21px; padding-left: 47px; display: flex; align-items: center; white-space: nowrap; position: relative; color: #333; }
.fields li b { width: 26px; margin-left: -26px; font-size: 9.5px; color: #3a7fa0; font-weight: 600; font-style: normal; letter-spacing: 0; }
.fields li svg { margin: 0 13px 0 -24px; }
.fields li svg[width="10"] { margin: 0 13px 0 -23px; }
.fields li svg[width="12"] { margin: 0 12px 0 -24px; }
.measures { margin-top: 2px; position: relative; }
.measures::before { content: ""; display: block; height: 1px; margin: 0 7px -1px 15px; background: #ddd; }
.fields .gen { font-style: italic; letter-spacing: .38px; }

.cards { width: 154px; margin: -1px 0 0 6px; display: flex; flex-direction: column; gap: 6px; color: #555; }
.card { border: 1px solid #d0d0d0; background: #fafafa; padding: 7px 6px; }
.pages { height: 62px; }
.filters { height: 78px; }
.marks { height: 218px; }
.mark-type { height: 21px; margin-top: 12px; border: 1px solid #c4c4c4; border-radius: 2px; display: flex; align-items: center; padding-left: 12px; width: 140px; }
.mark-type span { flex: 1; padding-left: 7px; color: #666; letter-spacing: -.35px; }
.mark-type b { height: 19px; width: 18px; }
.mark-buttons { display: grid; grid-template-columns: 43px 42px 43px; gap: 6px; margin-top: 6px; color: #333; letter-spacing: -.2px; }
.mark-buttons div { height: 42px; border: 1px solid #d0d0d0; display: flex; flex-direction: column; align-items: center; padding-top: 6px; }
.mark-buttons div svg { margin-bottom: 4px; }
.tip-label { letter-spacing: -.4px; }
.encoding { display: flex; align-items: center; margin: 9px 0 0 7px; }
.pill { height: 20px; border-radius: 10px; color: #fff; padding: 0 11px; line-height: 19px; white-space: nowrap; font-weight: 500; }
.blue { background: #4996b2; }
.green { background: #00b180; }
.encoding .pill { width: 111px; margin-left: 4px; }

.view-column { width: 824px; margin: -1px 0 0 6px; display: flex; flex-direction: column; gap: 6px; }
.shelf { height: 28px; border: 1px solid #d0d0d0; background: #fafafa; display: flex; align-items: center; color: #555; }
.shelf-name { width: 125px; height: 26px; border-right: 1px solid #d0d0d0; display: flex; align-items: center; gap: 7px; padding-left: 6px; }
.shelf .pill { width: 148px; margin-left: 2px; padding: 0 12px 0 11px; display: flex; align-items: center; justify-content: space-between; }
.shelf .green { letter-spacing: -.05px; padding-right: 4px; }
.sheet { height: 519px; border: 1px solid #b0b0b0; background: #fff; }
.chart text { font-family: "Noto Sans", sans-serif; font-size: 12px; fill: #707070; }
.chart .chart-title { font-size: 34px; fill: #333; stroke: #333; stroke-width: .4px; }
.chart .col-head, .chart .axis-name { fill: #333; }
.chart .null-text { fill: #fff; font-weight: 600; font-size: 13px; }
.grid { fill: none; stroke: #efefef; }

.show-me { position: absolute; left: 1158px; top: 48px; width: 204px; filter: drop-shadow(2px 2px 1px rgba(0,0,0,.3)); }
.show-me-tab { width: 111px; height: 37px; margin: 0 0 -1px 93px; border: 1px solid #ddd; border-bottom: 0; background: #fafafa; display: flex; align-items: center; gap: 6px; padding: 0 0 8px 11px; font-size: 13px; color: #222; position: relative; }
.show-me-body { height: 556px; border: 1px solid #d6d6d6; background: #fafafa; padding: 14px 0 0 13px; }
.thumbs { display: grid; grid-template-columns: repeat(3, 56px); gap: 4px; }
.thumbs svg { width: 56px; height: 42px; background: #fff; outline: 1px solid #ddd; outline-offset: -1px; }
.thumbs .picked { outline: 2px solid #dc6b2f; outline-offset: -2px; }
.tiny text { font: 14px "Liberation Serif", serif; fill: #444; }
.hint { padding-left: 2px; color: #333; }
.for { margin: 18px 0 0; letter-spacing: -.1px; }
.for b { color: #111; font-weight: 600; }
.need { display: flex; align-items: center; height: 20px; margin-top: 8px; }
.need > span:first-child { padding-top: 4px; white-space: nowrap; letter-spacing: -.15px; }
.for + .need { margin-top: 7px; }
.need-geo { width: 36px; }
.need-more { width: 57px; }
.need-two { width: 34px; }
.need svg { margin-top: -1px; }
.p-dim { width: 84px; margin-left: 5px; padding: 0 10px; }
.p-dims { width: 90px; padding: 0 10px; }
.p-meas { width: 79px; padding: 0 10px; }
.note { margin: 12px 0 0; color: #999; white-space: nowrap; letter-spacing: -.15px; }

.sheet-tabs { height: 30px; flex: none; margin-top: -1px; border-top: 1px solid #c4c4c4; border-bottom: 1px solid #d0d0d0; background: #e6e6e6; display: flex; line-height: 29px; color: #777; position: relative; letter-spacing: -.12px; }
.sheet-tabs div { border-right: 1px solid #c4c4c4; padding-left: 5px; white-space: nowrap; overflow: hidden; flex: none; }
.sheet-tabs .t1 { width: 131px; padding-left: 9px; display: flex; gap: 5px; letter-spacing: 0; }
.t1 svg { margin-top: 8px; }
.sheet-tabs .t2 { width: 124px; padding-left: 6px; } .t3 { width: 165px; letter-spacing: -.2px; } .t4 { width: 98px; } .t5 { width: 148px; letter-spacing: -.2px; } .t6 { width: 174px; } .t7 { width: 155px; } .t8 { width: 115px; } .t9 { width: 116px; } .t10 { width: 44px; letter-spacing: -.6px; }
.sheet-tabs .active { background: #fafafa; color: #333; font-weight: 600; line-height: 27px; letter-spacing: 0; }
.sheet-tabs .add { width: 32px; padding: 7px 0 0 8px; }
.status { height: 21px; flex: none; background: #ebebeb; display: flex; line-height: 21px; font-size: 11px; position: relative; padding-left: 3px; white-space: nowrap; }
.s1 { width: 62px; letter-spacing: -.2px; } .s2 { width: 118px; letter-spacing: -.25px; } .s3 { letter-spacing: .18px; }
.status svg { margin-left: auto; }

.taskbar { height: 40px; flex: none; display: flex; color: #fff; background: linear-gradient(90deg, #13212b 0, #13212b 50px, #252d30 400px, #15252f 470px, #14242d 650px, #2d363b 820px, #233039 1020px, #2b2927 1130px, #2f1c10 1290px, #331a0c 1366px); }
.start { width: 48px; display: grid; place-items: center; }
.win-search { width: 343px; background: #f2f2f2; color: #333; display: flex; align-items: center; padding: 0 14px 0 9px; font-size: 14px; }
.win-search span { flex: 1; margin-left: 9px; letter-spacing: -.08px; padding-top: 1px; }
.task-active { width: 48px; background: #4c565a; border-bottom: 2px solid #76d860; display: grid; place-items: center; }
.task-active span { width: 22px; height: 23px; background: #fff; color: #2d84b5; display: grid; place-items: center; }
.tray { flex: 1; display: flex; align-items: center; padding-left: 318px; font-size: 12px; }
.chev { margin-left: 22px; }
.wifi { margin-left: 13px; }
.batt { margin-left: 9px; }
.eng { margin-left: 8px; width: 28px; letter-spacing: -.3px; }
.clock { width: 70px; margin-left: 2px; text-align: center; line-height: 18px; white-space: nowrap; letter-spacing: -.35px; }
.notif { margin-left: 13px; }
```
